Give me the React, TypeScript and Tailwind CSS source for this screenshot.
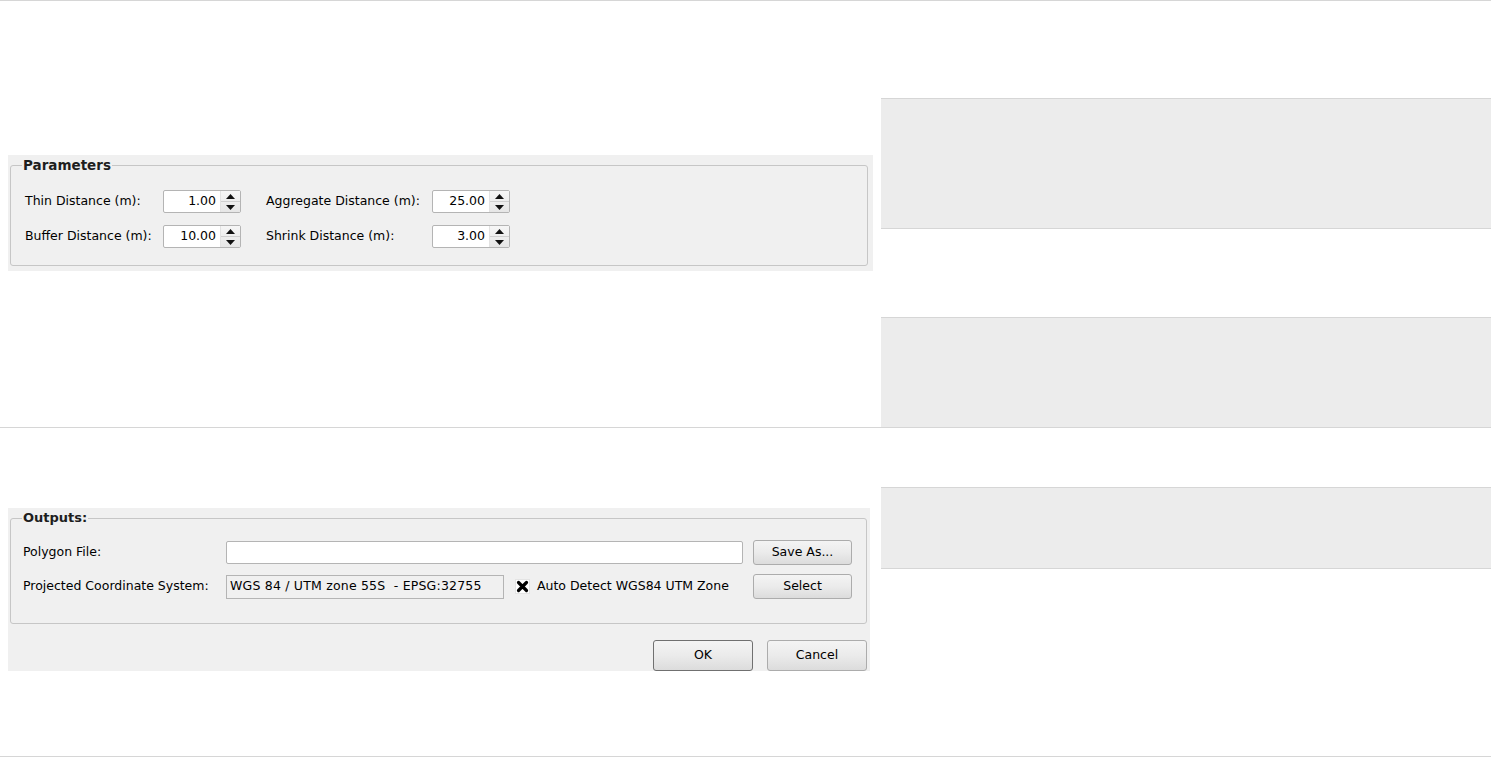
import React from 'react';

const font = { fontFamily: '"DejaVu Sans", Verdana, sans-serif' };

function SpinBox({ value }: { value: string }) {
  return (
    <div className="flex h-[23px] w-[78px] rounded-[2px] border border-[#b4b4b4] bg-white">
      <div className="flex flex-1 items-center justify-end pr-[4px] text-[12.5px] text-black">{value}</div>
      <div className="flex w-[20px] flex-col border-l border-[#e2e2e2] bg-gradient-to-b from-[#f6f6f6] to-[#e6e6e6]">
        <div className="flex flex-1 items-center justify-center border-b border-[#cfcfcf]">
          <svg width="9" height="5" viewBox="0 0 9 5">
            <path d="M0 5 L4.5 0 L9 5 Z" fill="#111" />
          </svg>
        </div>
        <div className="flex flex-1 items-center justify-center">
          <svg width="9" height="5" viewBox="0 0 9 5">
            <path d="M0 0 L4.5 5 L9 0 Z" fill="#111" />
          </svg>
        </div>
      </div>
    </div>
  );
}

function WinButton({ label, className = '' }: { label: string; className?: string }) {
  return (
    <div
      className={`flex items-center justify-center rounded-[3px] border bg-gradient-to-b from-[#f4f4f4] via-[#ebebeb] to-[#dcdcdc] text-[12.5px] text-black ${className}`}
    >
      {label}
    </div>
  );
}

function ParametersDialog() {
  const rows = [
    { a: 'Thin Distance (m):', av: '1.00', b: 'Aggregate Distance (m):', bv: '25.00' },
    { a: 'Buffer Distance (m):', av: '10.00', b: 'Shrink Distance (m):', bv: '3.00' },
  ];
  return (
    <div className="h-[116px] w-[865px] bg-[#f0f0f0] pl-[2px] pt-[2px]" style={font}>
      <fieldset className="h-[109px] w-[858px] rounded-[3px] border border-[#c6c6c6] pl-[14px] pt-[17px]">
        <legend className="-ml-[3px] px-[1px] text-[13.5px] font-bold leading-[16px] text-[#1e1e1e]">Parameters</legend>
        <div className="flex flex-col gap-[12px]">
          {rows.map(r => (
            <div key={r.a} className="flex items-center">
              <span className="w-[138px] text-[12.5px] text-black">{r.a}</span>
              <SpinBox value={r.av} />
              <span className="ml-[25px] w-[166px] text-[12.5px] text-black">{r.b}</span>
              <SpinBox value={r.bv} />
            </div>
          ))}
        </div>
      </fieldset>
    </div>
  );
}

function OutputsDialog() {
  return (
    <div className="h-[163px] w-[862px] bg-[#f0f0f0] pl-[2px] pt-[2px]" style={font}>
      <fieldset className="h-[114px] w-[857px] rounded-[3px] border border-[#c6c6c6] pl-[12px] pt-[14px]">
        <legend className="-ml-[1px] px-[1px] text-[13px] font-bold leading-[16px] text-[#1e1e1e]">Outputs:</legend>
        <div className="flex flex-col gap-[9px]">
          <div className="flex h-[25px] items-center">
            <span className="w-[203px] text-[12.5px] text-black">Polygon File:</span>
            <div className="h-[23px] w-[517px] rounded-[2px] border border-[#b4b4b4] bg-white" />
            <WinButton label="Save As..." className="ml-[10px] h-[25px] w-[99px] border-[#acacac]" />
          </div>
          <div className="flex h-[25px] items-center">
            <span className="w-[203px] text-[12.5px] text-black">Projected Coordinate System:</span>
            <div className="flex h-[24px] w-[278px] items-center whitespace-pre border border-[#b4b4b4] bg-[#f0f0f0] pl-[3px] text-[12.5px] tracking-[0.2px] text-black">
              WGS 84 / UTM zone 55S  - EPSG:32755
            </div>
            <div className="ml-[11px] flex items-center">
              <svg width="15" height="15" viewBox="0 0 15 15">
                <rect x="0.5" y="0.5" width="14" height="14" fill="#fff" stroke="#e4e4e4" />
                <path d="M3.5 3.5 L11.5 11.5 M11.5 3.5 L3.5 11.5" stroke="#000" strokeWidth="3.2" strokeLinecap="round" />
              </svg>
              <span className="ml-[7px] w-[216px] whitespace-nowrap text-[12.5px] text-black">Auto Detect WGS84 UTM Zone</span>
            </div>
            <WinButton label="Select" className="h-[25px] w-[99px] border-[#acacac]" />
          </div>
        </div>
      </fieldset>
      <div className="mt-[16px] flex">
        <WinButton label="OK" className="ml-[643px] h-[31px] w-[100px] border-[#707070]" />
        <WinButton label="Cancel" className="ml-[14px] h-[31px] w-[100px] border-[#acacac]" />
      </div>
    </div>
  );
}

export default function App() {
  return (
    <div className="h-[757px] w-full overflow-hidden bg-white">
      {/* row 1 */}
      <div className="flex h-[427px] border-t border-[#d6d6d6]">
        <div className="w-[881px] shrink-0 pl-[8px] pt-[154px]">
          <ParametersDialog />
        </div>
        <div className="flex flex-1 flex-col">
          <div className="mt-[97px] h-[131px] border-y border-[#d6d6d6] bg-[#ececec]" />
          <div className="mt-[88px] h-[110px] border-t border-[#d6d6d6] bg-[#ececec]" />
        </div>
      </div>
      {/* row 2 */}
      <div className="flex h-[330px] border-y border-[#d6d6d6]">
        <div className="w-[881px] shrink-0 pl-[8px] pt-[80px]">
          <OutputsDialog />
        </div>
        <div className="flex flex-1 flex-col">
          <div className="mt-[59px] h-[82px] border-y border-[#d6d6d6] bg-[#ececec]" />
        </div>
      </div>
    </div>
  );
}
